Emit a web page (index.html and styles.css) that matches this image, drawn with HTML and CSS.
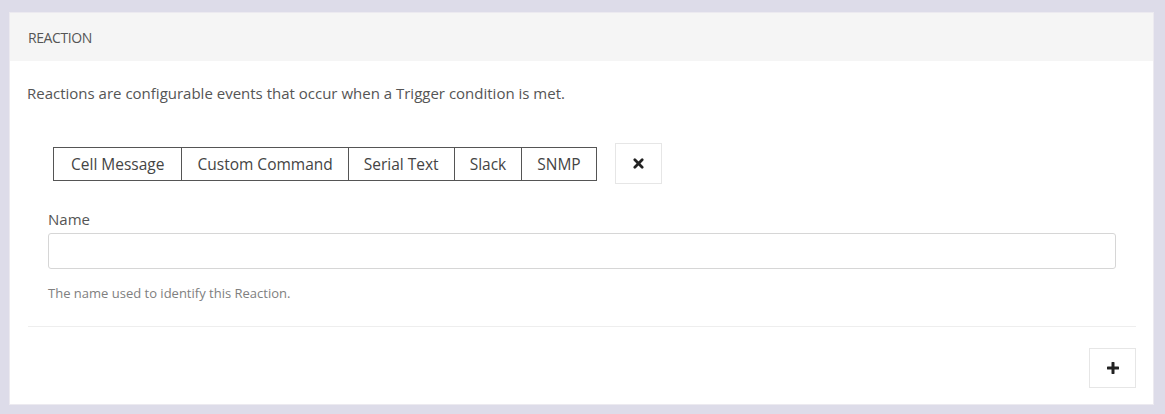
FILE: index.html
```html
<!DOCTYPE html>
<html>
<head>
<meta charset="utf-8">
<link rel="stylesheet" href="styles.css">
</head>
<body>
<div class="panel">
  <div class="panel-head">REACTION</div>
  <div class="panel-body">
    <p class="desc">Reactions are configurable events that occur when a Trigger condition is met.</p>
    <div class="item">
      <div class="type-row">
        <div class="btn-group">
          <span class="seg">Cell Message</span>
          <span class="seg">Custom Command</span>
          <span class="seg">Serial Text</span>
          <span class="seg">Slack</span>
          <span class="seg">SNMP</span>
        </div>
        <button class="icon-btn remove" type="button">
          <svg width="11" height="11" viewBox="0 0 12 12"><path d="M2 2 L10 10 M10 2 L2 10" stroke="#222" stroke-width="3" stroke-linecap="round"/></svg>
        </button>
      </div>
      <label class="label">Name</label>
      <input class="input" type="text">
      <div class="help">The name used to identify this Reaction.</div>
    </div>
    <div class="footer">
      <button class="icon-btn add" type="button">
        <svg width="12" height="12" viewBox="0 0 12 12"><path d="M6 1 V11 M1 6 H11" stroke="#222" stroke-width="3" stroke-linecap="round"/></svg>
      </button>
    </div>
  </div>
</div>
</body>
</html>
```
FILE: styles.css
```css
html, body {
  margin: 0;
  padding: 0;
}
body {
  background: #dddce9;
  font-family: "Open Sans", "Liberation Sans", sans-serif;
  color: #555;
  padding: 12px 11px 9px 9px;
  height: 414px;
  box-sizing: border-box;
}
.panel {
  background: #fff;
  height: 100%;
  box-sizing: border-box;
  border: 1px solid #eceaf0;
  display: flex;
  flex-direction: column;
}
.panel-head {
  background: #f5f5f5;
  height: 48px;
  display: flex;
  align-items: center;
  padding-left: 18px;
  font-size: 14px;
  letter-spacing: -0.4px;
  color: #555;
}
.panel-body {
  padding: 0 17px 0 18px;
  flex: 1;
  display: flex;
  flex-direction: column;
}
.desc {
  margin: 22px 0 0 -1px;
  font-size: 15px;
  line-height: 20px;
  color: #555;
}
.item {
  padding: 0 20px 24px 20px;
  border-bottom: 1px solid #eeeeee;
}
.type-row {
  display: flex;
  align-items: center;
  margin-top: 40px;
  margin-left: 5px;
}
.btn-group {
  display: flex;
  border: 1px solid #555;
}
.seg {
  height: 32px;
  display: flex;
  align-items: center;
  padding: 0 15px;
  font-size: 15.5px;
  color: #444;
  border-left: 1px solid #555;
}
.seg:first-child {
  border-left: none;
  padding: 0 17px;
}
.icon-btn {
  background: #fff;
  border: 1px solid #e6e6e6;
  width: 47px;
  height: 41px;
  display: flex;
  align-items: center;
  justify-content: center;
  padding: 0;
}
.remove {
  margin-left: 18px;
}
.add {
  height: 40px;
}
.label {
  display: block;
  margin-top: 25px;
  font-size: 15px;
  line-height: 20px;
  color: #555;
}
.input {
  display: block;
  box-sizing: border-box;
  width: 100%;
  height: 36px;
  margin-top: 4px;
  border: 1px solid #d6d6d6;
  border-radius: 3px;
  background: #fff;
}
.help {
  margin-top: 15px;
  font-size: 13px;
  line-height: 18px;
  color: #808080;
}
.footer {
  display: flex;
  justify-content: flex-end;
  padding-top: 21px;
}
```
